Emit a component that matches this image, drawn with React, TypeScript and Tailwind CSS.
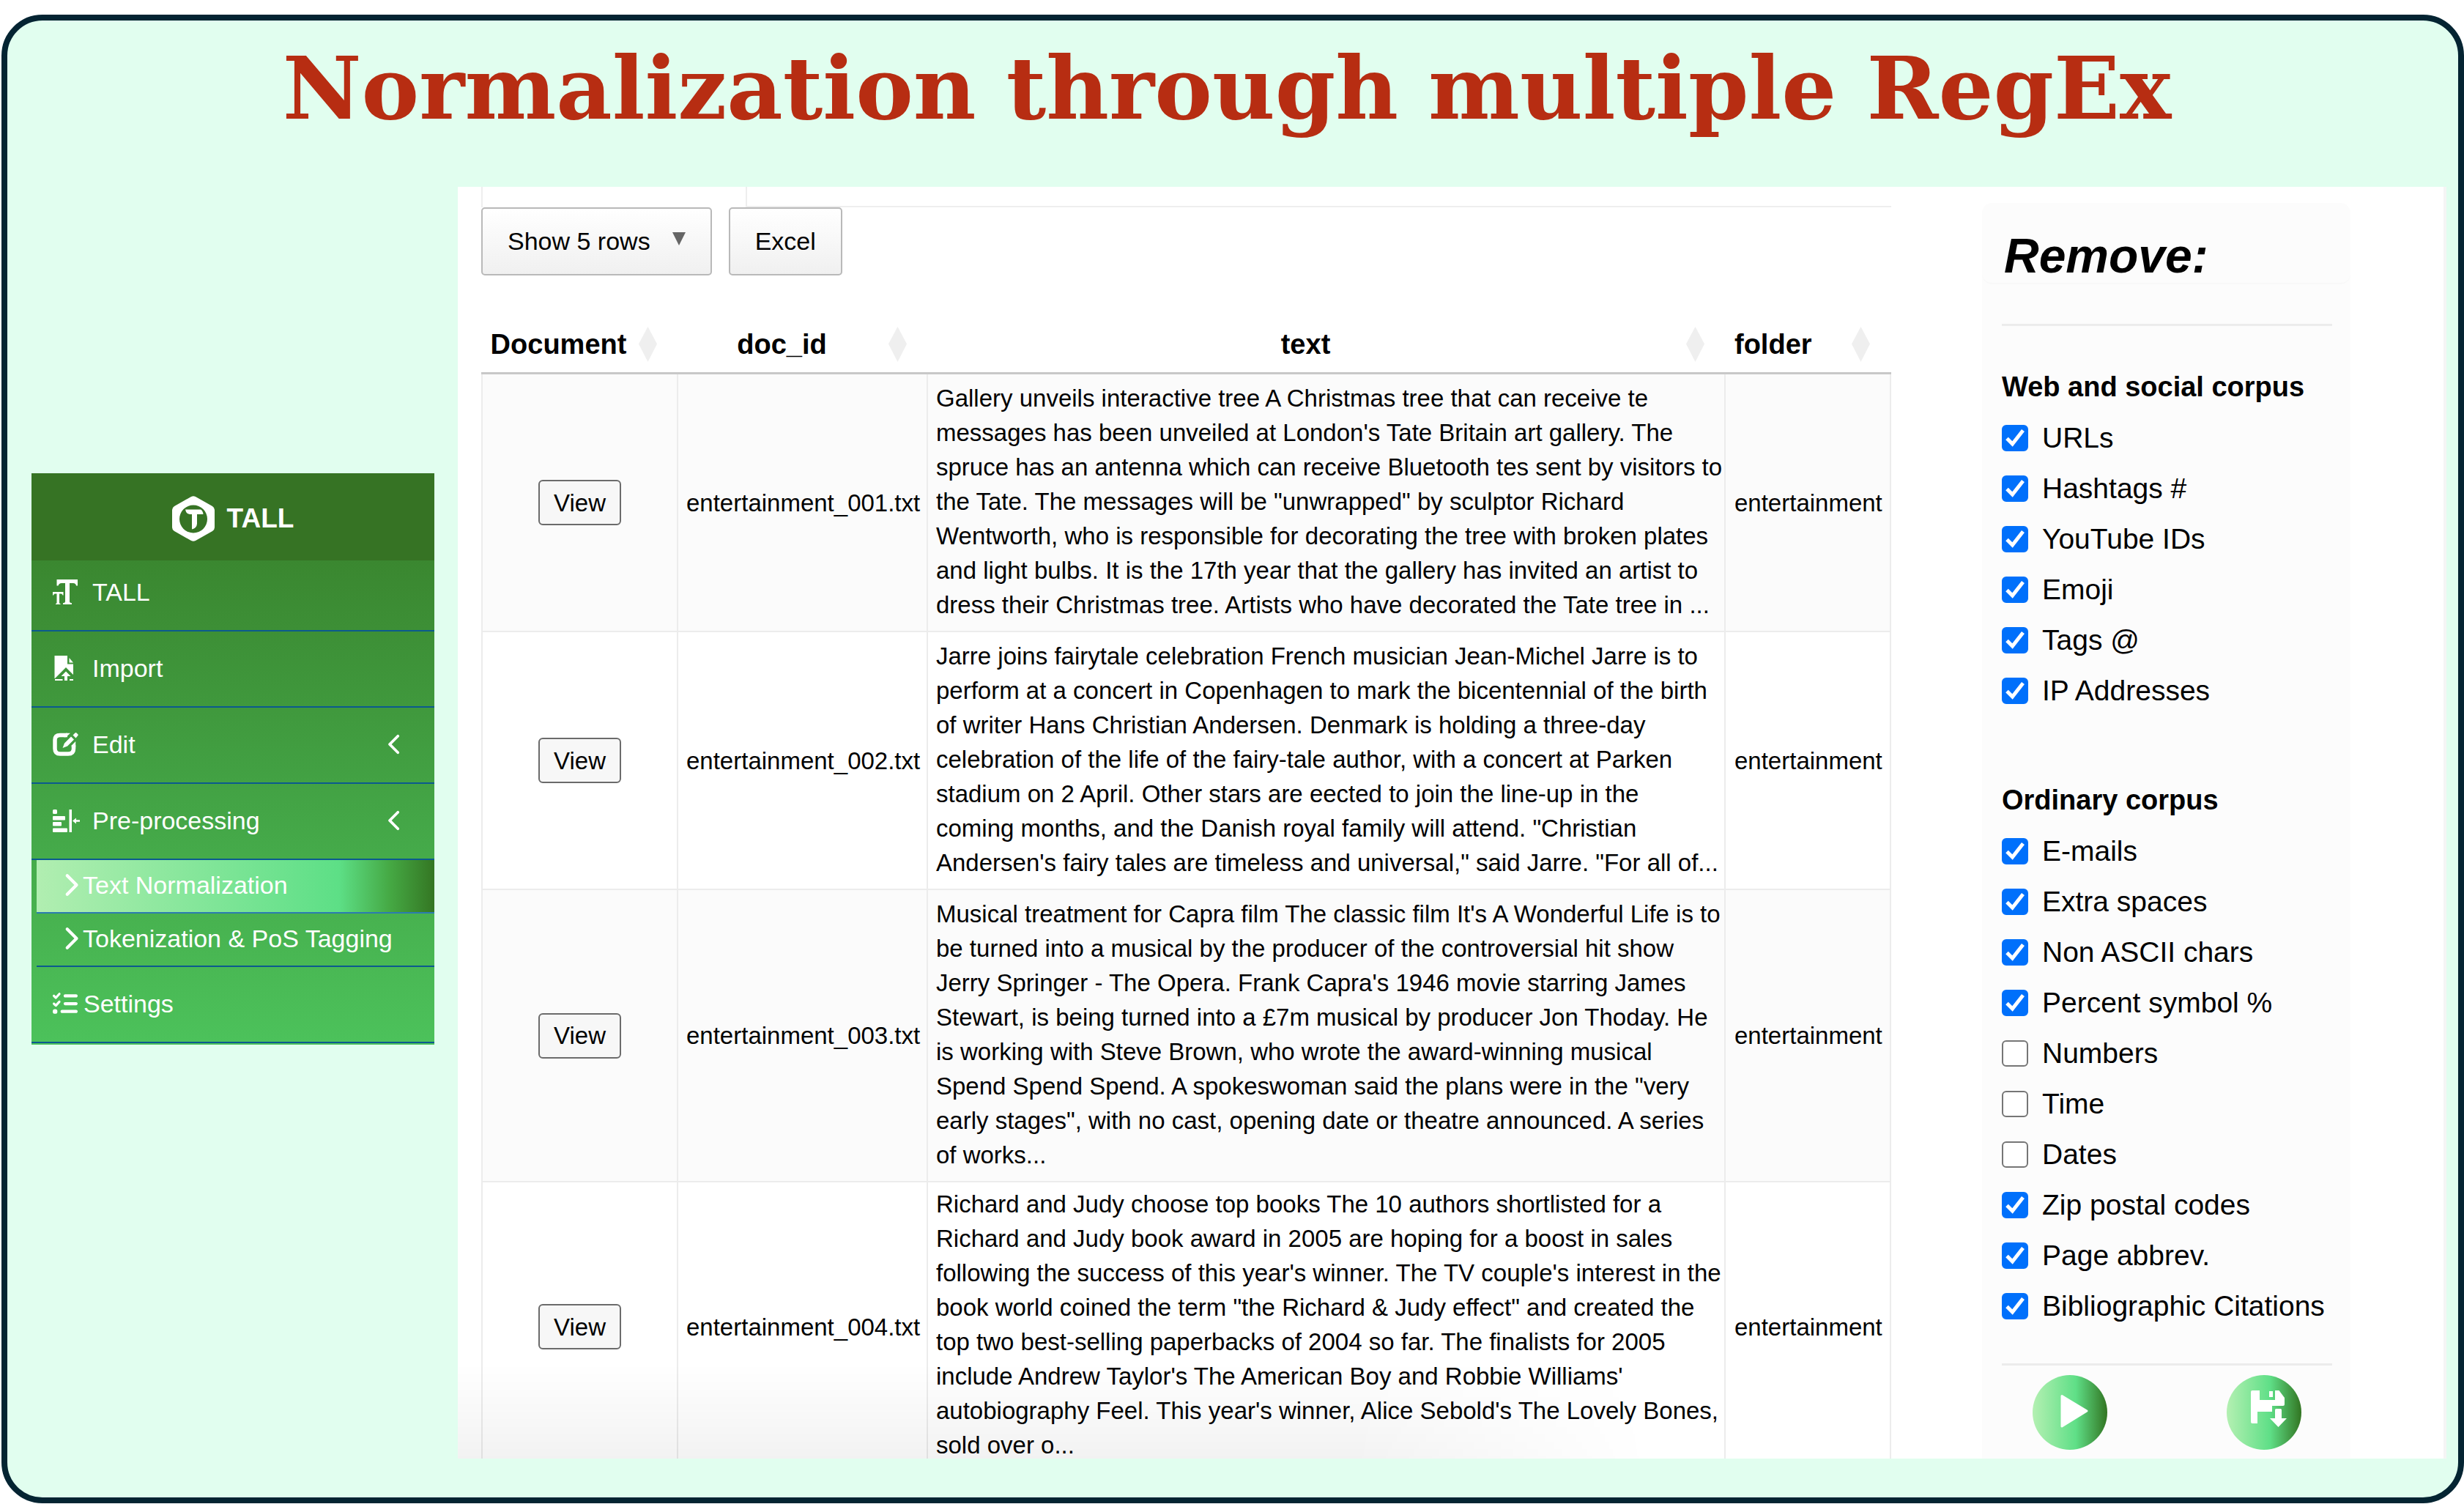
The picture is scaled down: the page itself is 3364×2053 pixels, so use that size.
import type { ReactNode } from "react";
import { FaChevronLeft, FaChevronRight, FaListCheck } from "react-icons/fa6";

const rows: { id: string; folder: string; lines: string[] }[] = [
  {
    id: "entertainment_001.txt",
    folder: "entertainment",
    lines: [
      "Gallery unveils interactive tree A Christmas tree that can receive te",
      "messages has been unveiled at London's Tate Britain art gallery. The",
      "spruce has an antenna which can receive Bluetooth tes sent by visitors to",
      'the Tate. The messages will be "unwrapped" by sculptor Richard',
      "Wentworth, who is responsible for decorating the tree with broken plates",
      "and light bulbs. It is the 17th year that the gallery has invited an artist to",
      "dress their Christmas tree. Artists who have decorated the Tate tree in ...",
    ],
  },
  {
    id: "entertainment_002.txt",
    folder: "entertainment",
    lines: [
      "Jarre joins fairytale celebration French musician Jean-Michel Jarre is to",
      "perform at a concert in Copenhagen to mark the bicentennial of the birth",
      "of writer Hans Christian Andersen. Denmark is holding a three-day",
      "celebration of the life of the fairy-tale author, with a concert at Parken",
      "stadium on 2 April. Other stars are eected to join the line-up in the",
      'coming months, and the Danish royal family will attend. "Christian',
      'Andersen\'s fairy tales are timeless and universal," said Jarre. "For all of...',
    ],
  },
  {
    id: "entertainment_003.txt",
    folder: "entertainment",
    lines: [
      "Musical treatment for Capra film The classic film It's A Wonderful Life is to",
      "be turned into a musical by the producer of the controversial hit show",
      "Jerry Springer - The Opera. Frank Capra's 1946 movie starring James",
      "Stewart, is being turned into a £7m musical by producer Jon Thoday. He",
      "is working with Steve Brown, who wrote the award-winning musical",
      'Spend Spend Spend. A spokeswoman said the plans were in the "very',
      'early stages", with no cast, opening date or theatre announced. A series',
      "of works...",
    ],
  },
  {
    id: "entertainment_004.txt",
    folder: "entertainment",
    lines: [
      "Richard and Judy choose top books The 10 authors shortlisted for a",
      "Richard and Judy book award in 2005 are hoping for a boost in sales",
      "following the success of this year's winner. The TV couple's interest in the",
      'book world coined the term "the Richard & Judy effect" and created the',
      "top two best-selling paperbacks of 2004 so far. The finalists for 2005",
      "include Andrew Taylor's The American Boy and Robbie Williams'",
      "autobiography Feel. This year's winner, Alice Sebold's The Lovely Bones,",
      "sold over o...",
    ],
  },
];

const webOptions: [string, boolean][] = [
  ["URLs", true],
  ["Hashtags #", true],
  ["YouTube IDs", true],
  ["Emoji", true],
  ["Tags @", true],
  ["IP Addresses", true],
];

const ordinaryOptions: [string, boolean][] = [
  ["E-mails", true],
  ["Extra spaces", true],
  ["Non ASCII chars", true],
  ["Percent symbol %", true],
  ["Numbers", false],
  ["Time", false],
  ["Dates", false],
  ["Zip postal codes", true],
  ["Page abbrev.", true],
  ["Bibliographic Citations", true],
];

function LogoIcon() {
  return (
    <svg viewBox="0 0 58 62" className="h-[62px] w-[58px]" aria-hidden="true">
      <path
        fill="#fff"
        fillRule="evenodd"
        d="M26 1q3-1.500 6 0l23 13q3 2 3 5v24q0 3-3 5l-23 13q-3 1.500-6 0L3 48q-3-2-3-5V19q0-3 3-5ZM29 12.500a19 19 0 1 0 0 38a19 19 0 1 0 0-38Z"
      />
      <path fill="#fff" d="M18 18.500H39q3 1.500 3.500 6.500H34V38q-.5 6-7 7.500V25h-3q-5-.5-6-6.500Z" />
    </svg>
  );
}

function TextSizeIcon() {
  return (
    <svg viewBox="0 0 34 34" className="size-[34px]" fill="currentColor" aria-hidden="true">
      <path d="M5.500 0H34V8.500H32Q31.500 5 28 5H23V30Q23 32 26 32.200V34H14V32.200Q17 32 17 30V5H12Q8.500 5 7.500 8.500H5.500Z" />
      <path d="M0 17H14.500V21.500H13.500Q13 19.500 11.500 19.500H9V32Q9 33 10.500 33V34H4V33Q5.500 33 5.500 32V19.500H3Q1.500 19.500 1 21.500H0Z" />
    </svg>
  );
}

function ImportIcon() {
  return (
    <svg viewBox="0 0 34 34" className="size-[34px]" fill="currentColor" aria-hidden="true">
      <path d="M2.500 0H20V11.500H28V26L18 16L3 31H2.500Z" />
      <path d="M22.500 3L28 9.500H22.500Z" />
      <path d="M18 21.500L24.500 28H20V34H16V28H11.500ZM3 32H13.500V34H3ZM23 32H28V34H23Z" />
    </svg>
  );
}

function EditIcon() {
  return (
    <svg viewBox="0 0 35 32" className="h-[32px] w-[35px]" aria-hidden="true">
      <path
        d="M20 3.500H10Q3 3.500 3 10V22Q3 29 10 29H21Q28.500 29 28.500 22V17"
        fill="none"
        stroke="currentColor"
        strokeWidth="5.500"
      />
      <path
        fill="currentColor"
        d="M18 .8H24L18 6.200H15ZM25.800 17.500L31.200 12V20H25.800ZM25 5.500L29 9.500L20 18.500L13.500 21L16 14.500ZM27.500 3.500L30.500.5Q31.500-.5 32.500.5L34.500 2.500Q35 3.500 34 4.500L31.500 7.500Z"
      />
    </svg>
  );
}

function IndentIcon() {
  return (
    <svg viewBox="0 0 37 31" className="h-[31px] w-[37px]" fill="currentColor" aria-hidden="true">
      <rect x="0" y="0" width="6" height="6" rx="1.500" />
      <rect x="0" y="9" width="17" height="5.500" rx="1" />
      <rect x="0" y="17" width="12" height="5.500" rx="1" />
      <rect x="0" y="25.500" width="20" height="5.500" rx="1" />
      <rect x="22.500" y="0" width="3.500" height="31" />
      <path d="M27 15.500L32 11.500V14.200H37V16.800H32V19.500Z" />
    </svg>
  );
}

function SortIcon() {
  return (
    <svg viewBox="0 0 25 48" className="h-[48px] w-[25px] shrink-0" fill="#efefef" aria-hidden="true">
      <path d="M12.500 0L25 23.500L12.500 48L0 23.500Z" />
    </svg>
  );
}

function NavItem({
  icon,
  label,
  first = false,
  expandable = false,
  tight = false,
}: {
  icon: ReactNode;
  label: string;
  first?: boolean;
  expandable?: boolean;
  tight?: boolean;
}) {
  return (
    <a
      href="#"
      className={`flex items-center border-b-2 border-[#0b5a8e] pr-11 pb-7 pl-[29px] text-[34px] leading-[48px] ${first ? "pt-[19px]" : "pt-[26px]"}`}
    >
      <span className={`shrink-0 ${tight ? "w-[42px]" : "w-[54px]"}`}>{icon}</span>
      <span className="flex-1 whitespace-nowrap">{label}</span>
      {expandable && <FaChevronLeft className="h-[30px] w-[19px]" />}
    </a>
  );
}

function SubItem({ label, active = false }: { label: string; active?: boolean }) {
  return (
    <a
      href="#"
      className={`ml-[7px] flex items-center border-b-2 pt-[10px] pb-[13px] pl-[35px] text-[34px] leading-[48px] whitespace-nowrap ${
        active
          ? "border-[#2b7cb0] bg-[linear-gradient(90deg,#b1eeb1_0%,#5ddf86_76%,#45a843_89%,#347623_100%)]"
          : "border-[#0b5a8e]"
      }`}
    >
      <span className="w-7 shrink-0">
        <FaChevronRight className="h-[34px] w-[22px]" />
      </span>
      {label}
    </a>
  );
}

function Option({ label, checked }: { label: string; checked: boolean }) {
  return (
    <label className="flex items-center text-[39px] leading-[69px] whitespace-nowrap">
      <span className="relative mr-[19px] size-9 shrink-0">
        <input
          type="checkbox"
          defaultChecked={checked}
          className="peer block size-9 appearance-none rounded-[6px] border-2 border-[#767676] bg-white checked:border-[#0070fb] checked:bg-[#0070fb]"
        />
        <svg
          viewBox="0 0 36 36"
          className="pointer-events-none absolute inset-0 hidden size-9 peer-checked:block"
          fill="none"
          stroke="#fff"
          strokeWidth="5"
          aria-hidden="true"
        >
          <path d="M7 18.500L14.500 26L29 7.500" />
        </svg>
      </span>
      {label}
    </label>
  );
}

function HeaderCell({ label, left = false }: { label: string; left?: boolean }) {
  return (
    <th scope="col" className="h-[91px] border-b-[3px] border-[#c8c8c8] pt-3 pr-[29px] pl-3 text-[38px] font-bold">
      <div className="flex items-center gap-4">
        <span className={`flex-1 ${left ? "text-left" : "text-center"}`}>{label}</span>
        <SortIcon />
      </div>
    </th>
  );
}

const toolButton =
  "flex h-[93px] items-center rounded-[5px] border-2 border-[#b9b9b9] bg-linear-to-b from-white to-[#f0f0f0] text-[34px]";
const roundButton =
  "size-[102px] rounded-full bg-[linear-gradient(90deg,#b4f0b2_0%,#5fdf87_58%,#327522_100%)]";
const cell = "border-r-2 border-b-2 border-[#ececec]";

export default function App() {
  return (
    <div className="flex h-screen flex-col bg-white pt-5 pb-px pl-[2px] font-['Liberation_Sans',Arial,sans-serif] text-black">
      <div className="flex min-h-0 flex-1 flex-col rounded-[56px] border-8 border-[#042432] bg-[#e1feef] pr-4 pb-[53px]">
        <h1 className="h-[227px] shrink-0 pt-6 text-center font-['DejaVu_Serif',serif] text-[118px] leading-[138px] font-bold whitespace-nowrap text-[#b72d12]">
          Normalization through multiple RegEx
        </h1>

        <div className="flex min-h-0 flex-1 items-start gap-8 pl-[33px]">
          <nav className="mt-[391px] w-[550px] shrink-0 bg-linear-to-b from-[#377d28] to-[#4cc25b] pb-[2px] text-white">
            <div className="flex h-[119px] items-center justify-center gap-[17px] bg-[#367324] pt-1 text-[37px] font-bold">
              <LogoIcon />
              TALL
            </div>
            <NavItem first icon={<TextSizeIcon />} label="TALL" />
            <NavItem icon={<ImportIcon />} label="Import" />
            <NavItem expandable icon={<EditIcon />} label="Edit" />
            <NavItem expandable icon={<IndentIcon />} label="Pre-processing" />
            <SubItem active label="Text Normalization" />
            <SubItem label="Tokenization & PoS Tagging" />
            <NavItem tight icon={<FaListCheck className="size-[34px]" />} label="Settings" />
          </nav>

          <main className="relative flex h-full min-w-0 flex-1 overflow-hidden border-r-4 border-[#f5f5f5] bg-white pl-8">
            <section className="min-w-0 flex-1">
              <div className="flex h-7">
                <div className="w-[361px] border-l-2 border-[#eeeeee]" />
                <div className="flex-1 border-b-2 border-l-2 border-[#eeeeee]" />
              </div>
              <div className="flex gap-[23px]">
                <button type="button" aria-haspopup="menu" className={`${toolButton} gap-[30px] px-[34px]`}>
                  Show 5 rows
                  <svg viewBox="0 0 18 18" className="mb-2 size-[18px]" fill="#666" aria-hidden="true">
                    <path d="M0 0H18L9 18Z" />
                  </svg>
                </button>
                <button type="button" className={`${toolButton} px-[34px]`}>
                  Excel
                </button>
              </div>

              <table className="mt-11 w-full table-fixed border-separate border-spacing-0">
                <colgroup>
                  <col className="w-[269px]" />
                  <col className="w-[341px]" />
                  <col />
                  <col className="w-[226px]" />
                </colgroup>
                <thead>
                  <tr>
                    <HeaderCell label="Document" />
                    <HeaderCell label="doc_id" />
                    <HeaderCell label="text" />
                    <HeaderCell label="folder" left />
                  </tr>
                </thead>
                <tbody className="text-[33px] leading-[47px] whitespace-nowrap">
                  {rows.map((row) => (
                    <tr key={row.id} className="group odd:bg-[#fbfbfb]">
                      <td className={`${cell} border-l-2 text-center`}>
                        <button
                          type="button"
                          className="h-[62px] rounded-[6px] border-2 border-[#6b6b6b] bg-[#f7f7f7] px-[19px]"
                        >
                          View
                        </button>
                      </td>
                      <td className={`${cell} pl-[11px]`}>{row.id}</td>
                      <td className={`${cell} pt-[9px] pb-3 pl-[11px] group-last:pt-[6px]`}>
                        {row.lines.map((line) => (
                          <span key={line} className="block">
                            {line}
                          </span>
                        ))}
                      </td>
                      <td className={`${cell} pl-3`}>{row.folder}</td>
                    </tr>
                  ))}
                </tbody>
              </table>
            </section>

            <aside className="mt-[22px] mr-[127px] ml-[124px] w-[503px] shrink-0 rounded-t-[14px] bg-[#fcfcfc]">
              <h2 className="rounded-[14px] border-b-2 border-[#f8f8f8] pt-[35px] pl-[30px] text-[66px] leading-[74px] font-bold italic">
                Remove:
              </h2>
              <div className="pr-[25px] pl-[27px]">
                <hr className="mt-[54px] border-t-[3px] border-[#ececec]" />
                <h3 className="mt-14 mb-2 text-[38px] leading-[54px] font-bold">Web and social corpus</h3>
                {webOptions.map(([label, checked]) => (
                  <Option key={label} label={label} checked={checked} />
                ))}
                <h3 className="mt-[88px] mb-2 text-[38px] leading-[54px] font-bold">Ordinary corpus</h3>
                {ordinaryOptions.map(([label, checked]) => (
                  <Option key={label} label={label} checked={checked} />
                ))}
                <hr className="mt-11 border-t-[3px] border-[#ececec]" />
                <div className="mt-[13px] flex justify-between pr-[42px] pl-[42px]">
                  <button type="button" aria-label="Run" className={roundButton}>
                    <svg viewBox="0 0 102 102" aria-hidden="true">
                      <path
                        d="M40 28.500L74 49L40 70Z"
                        fill="#fff"
                        stroke="#fff"
                        strokeWidth="3"
                        strokeLinejoin="round"
                      />
                    </svg>
                  </button>
                  <button type="button" aria-label="Save" className={roundButton}>
                    <svg viewBox="0 0 102 102" fill="#fff" aria-hidden="true">
                      <g transform="translate(33 21)">
                        <path d="M2 0H12V13H33V0H38.500L46 10V19Q46 21 44 21H29V29H9V45H2Q0 45 0 43V2Q0 0 2 0Z" />
                        <path d="M25 1H30V9H25Z" />
                        <path d="M34.500 25H40.500Q42 25 42 26.500V38H49L37.500 50L26 38H33V26.500Q33 25 34.500 25Z" />
                      </g>
                    </svg>
                  </button>
                </div>
              </div>
            </aside>

            <div className="pointer-events-none absolute bottom-0 left-0 h-[130px] w-3/5 bg-linear-to-t from-black/5 to-transparent [mask-image:linear-gradient(90deg,#000_75%,transparent)]" />
          </main>
        </div>
      </div>
    </div>
  );
}
